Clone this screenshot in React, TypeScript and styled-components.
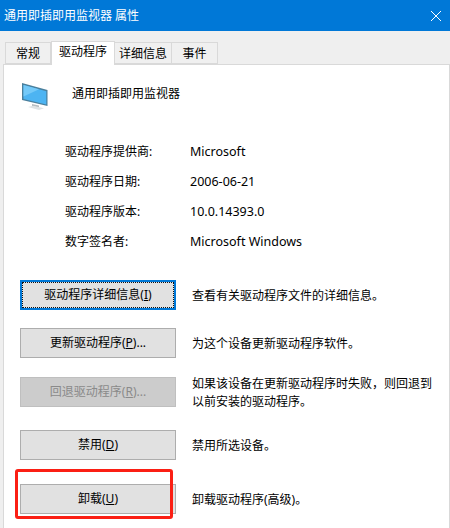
import React from 'react'
import styled, { createGlobalStyle } from 'styled-components'

const GlobalStyle = createGlobalStyle`
  html, body {
    margin: 0;
    padding: 0;
    background: #efefef;
  }
`

const info = [
  { label: '驱动程序提供商:', value: 'Microsoft' },
  { label: '驱动程序日期:', value: '2006-06-21' },
  { label: '驱动程序版本:', value: '10.0.14393.0' },
  { label: '数字签名者:', value: 'Microsoft Windows' },
]

function MonitorIcon() {
  return (
    <svg width="28" height="30" viewBox="0 0 28 30">
      <path d="M1 2 L26.5 9 L26.5 25 L1 19 Z" fill="#4a7f9c" />
      <path d="M2.5 4 L25.3 10.2 L25.3 23.4 L2.5 18 Z" fill="#4db4f2" />
      <path d="M2.5 4 L18 8.2 L2.5 15.5 Z" fill="#74c9f8" />
      <path d="M11 23 L18 24.6 L18 26.5 L11 25 Z" fill="#b5bcc0" />
      <path d="M7 26 L12 24.8 L23 27.2 L18 29 Z" fill="#dfe3e5" />
    </svg>
  )
}

function App() {
  return (
    <Window>
      <GlobalStyle />
      <TitleBar>
        <TitleText>通用即插即用监视器 属性</TitleText>
        <CloseGlyph width="10" height="10" viewBox="0 0 10 10">
          <path d="M0 0 L10 10 M10 0 L0 10" stroke="#fff" strokeWidth="1" />
        </CloseGlyph>
      </TitleBar>

      <TabStrip>
        <Tab $width={46}>常规</Tab>
        <Tab $width={64} $active>驱动程序</Tab>
        <Tab $width={57}>详细信息</Tab>
        <Tab $width={46}>事件</Tab>
      </TabStrip>

      <Pane>
        <Header>
          <MonitorIcon />
          <DeviceName>通用即插即用监视器</DeviceName>
        </Header>

        <InfoList>
          {info.map((row) => (
            <InfoRow key={row.label}>
              <InfoLabel>{row.label}</InfoLabel>
              <InfoValue>{row.value}</InfoValue>
            </InfoRow>
          ))}
        </InfoList>

        <Actions>
          <ActionRow $top={0}>
            <ActionButton $focused>驱动程序详细信息(<u>I</u>)</ActionButton>
            <ActionText>查看有关驱动程序文件的详细信息。</ActionText>
          </ActionRow>
          <ActionRow $top={18}>
            <ActionButton>更新驱动程序(<u>P</u>)...</ActionButton>
            <ActionText>为这个设备更新驱动程序软件。</ActionText>
          </ActionRow>
          <ActionRow $top={19}>
            <ActionButton $disabled>回退驱动程序(<u>R</u>)...</ActionButton>
            <ActionText>如果该设备在更新驱动程序时失败，则回退到<br />以前安装的驱动程序。</ActionText>
          </ActionRow>
          <ActionRow $top={23}>
            <ActionButton>禁用(<u>D</u>)</ActionButton>
            <ActionText>禁用所选设备。</ActionText>
          </ActionRow>
          <ActionRow $top={24}>
            <ActionButton>卸载(<u>U</u>)</ActionButton>
            <ActionText>卸载驱动程序(高级)。</ActionText>
            <Highlight />
          </ActionRow>
        </Actions>
      </Pane>
    </Window>
  )
}

const Window = styled.div`
  width: 450px;
  height: 528px;
  overflow: hidden;
  display: flex;
  flex-direction: column;
  background: #efefef;
  color: #000;
  font-family: "Noto Sans", "Noto Sans CJK SC", sans-serif;
  font-size: 12px;
  line-height: 18px;
`

const TitleBar = styled.div`
  height: 31px;
  flex: none;
  display: flex;
  align-items: center;
  justify-content: space-between;
  padding: 0 9px 0 4px;
  box-sizing: border-box;
  background: #0078d7;
  color: #fff;
`

const TitleText = styled.span`
  font-size: 12px;
`

const CloseGlyph = styled.svg`
  display: block;
`

const TabStrip = styled.div`
  height: 33px;
  flex: none;
  display: flex;
  align-items: flex-end;
  padding-left: 5px;
  box-sizing: border-box;
  position: relative;
  z-index: 1;
`

const Tab = styled.div<{ $width: number; $active?: boolean }>`
  width: ${(p) => p.$width}px;
  height: ${(p) => (p.$active ? 24 : 22)}px;
  box-sizing: border-box;
  display: flex;
  align-items: ${(p) => (p.$active ? 'flex-start' : 'center')};
  justify-content: center;
  padding-top: ${(p) => (p.$active ? 1 : 2)}px;
  border: 1px solid #d9d9d9;
  border-bottom: ${(p) => (p.$active ? 'none' : '1px solid #d9d9d9')};
  border-left: ${(p) => (p.$active ? '1px solid #d9d9d9' : 'none')};
  background: ${(p) => (p.$active ? '#fff' : '#f0f0f0')};
  margin-bottom: ${(p) => (p.$active ? -1 : 0)}px;
  &:first-child {
    border-left: 1px solid #d9d9d9;
  }
`

const Pane = styled.div`
  flex: 1;
  margin-left: 3px;
  padding: 0 0 0 16px;
  background: #fff;
  border-top: 1px solid #d9d9d9;
  border-left: 1px solid #d9d9d9;
  border-right: 1px solid #d9d9d9;
`

const Header = styled.div`
  display: flex;
  align-items: center;
  gap: 23px;
  height: 30px;
  margin-top: 16px;
  margin-left: 1px;
`

const DeviceName = styled.span`
  margin-top: -4px;
`

const InfoList = styled.div`
  display: flex;
  flex-direction: column;
  gap: 12px;
  margin: 32px 0 0 45px;
`

const InfoRow = styled.div`
  display: flex;
`

const InfoLabel = styled.span`
  width: 125px;
`

const InfoValue = styled.span`
  font-size: 12.5px;
`

const Actions = styled.div`
  display: flex;
  flex-direction: column;
  margin-top: 29px;
`

const ActionRow = styled.div<{ $top: number }>`
  height: 30px;
  display: flex;
  align-items: center;
  gap: 16px;
  margin-top: ${(p) => p.$top}px;
  position: relative;
`

const ActionButton = styled.div<{ $focused?: boolean; $disabled?: boolean }>`
  width: 156px;
  height: 30px;
  flex: none;
  box-sizing: border-box;
  display: flex;
  align-items: center;
  justify-content: center;
  background: ${(p) => (p.$disabled ? '#cccccc' : '#e1e1e1')};
  color: ${(p) => (p.$disabled ? '#8a8a8a' : '#000')};
  border: ${(p) => (p.$focused ? '2px solid #0078d7' : `1px solid ${p.$disabled ? '#bfbfbf' : '#adadad'}`)};
  outline: ${(p) => (p.$focused ? '1px dotted #111' : 'none')};
  outline-offset: -3px;
  white-space: pre;
`

const ActionText = styled.div`
  white-space: nowrap;
  padding-top: 1px;
`

const Highlight = styled.div`
  position: absolute;
  left: -5px;
  top: -15px;
  width: 158px;
  height: 50px;
  box-sizing: border-box;
  border: 3px solid #fb1f14;
  border-radius: 3px;
  pointer-events: none;
`

export default App
